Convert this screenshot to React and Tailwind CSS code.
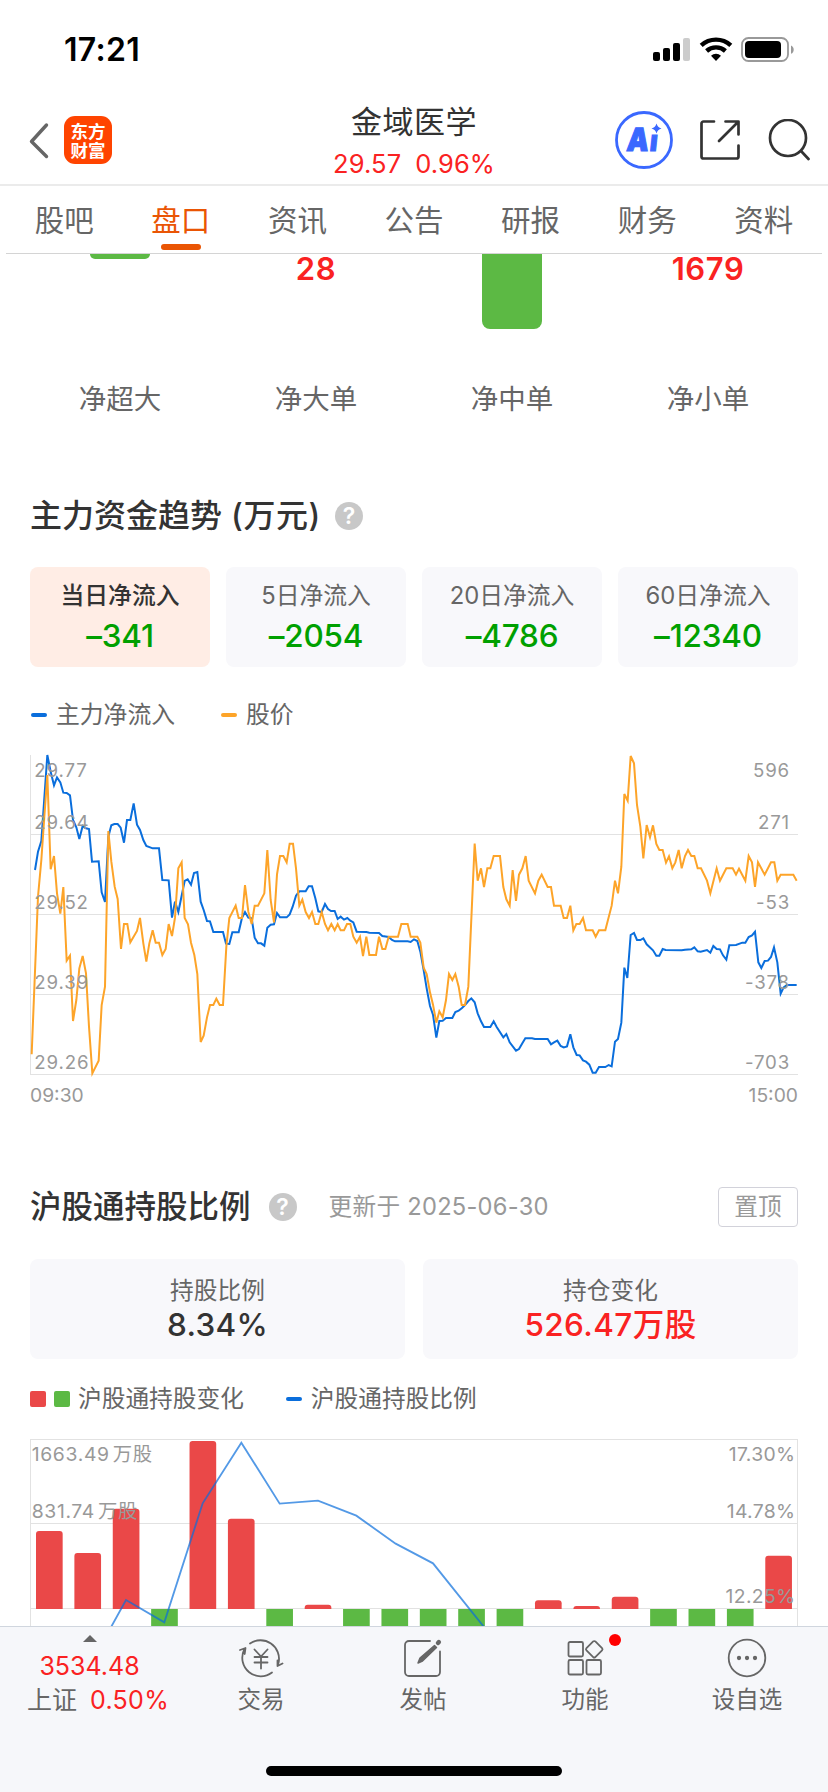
import React from 'react';

const tabs = ['股吧', '盘口', '资讯', '公告', '研报', '财务', '资料'];

const orders = [
  { name: '净超大', bar: 'h-[5px]' },
  { name: '净大单', value: '28' },
  { name: '净中单', bar: 'h-[75px]' },
  { name: '净小单', value: '1679' },
];

const inflows = [
  { name: '当日净流入', value: '–341', active: true },
  { name: '5日净流入', value: '–2054' },
  { name: '20日净流入', value: '–4786' },
  { name: '60日净流入', value: '–12340' },
];

const trendLabels = [
  { y: 110, price: '29.77', flow: '596' },
  { y: 267, price: '29.64', flow: '271' },
  { y: 507, price: '29.52', flow: '-53' },
  { y: 747, price: '29.39', flow: '-378' },
  { y: 987, price: '29.26', flow: '-703' },
];

const flowPoints =
  '105,390 114,335 124,303 142,45 152,95 162,136 171,112 181,127 190,158 200,159 210,166 219,240 229,262 238,297 248,258 258,265 267,267 276,365 296,364 305,457 315,486 325,290 334,256 343,252 353,252 362,263 372,308 381,240 391,240 401,190 411,254 420,270 430,300 439,318 458,325 477,325 487,420 506,421 516,533 525,485 535,516 554,423 563,418 573,434 582,399 592,396 602,485 611,510 621,543 630,544 640,576 669,576 678,611 688,612 697,577 716,577 726,533 735,516 745,533 755,535 764,593 774,610 783,610 793,617 802,563 812,554 822,553 831,519 840,532 860,532 869,523 878,500 888,467 898,454 917,454 926,439 936,439 946,475 955,514 965,516 975,492 984,507 993,513 1004,513 1013,537 1022,530 1032,539 1042,534 1051,542 1060,547 1070,575 1099,576 1108,578 1137,579 1147,588 1166,591 1176,600 1185,604 1223,604 1232,606 1242,598 1252,603 1261,635 1271,690 1280,745 1290,798 1299,824 1309,893 1318,843 1328,842 1338,834 1357,834 1366,816 1376,812 1386,804 1395,795 1405,783 1414,775 1424,787 1433,820 1443,844 1452,861 1471,861 1481,844 1490,861 1510,892 1519,882 1529,907 1548,932 1557,927 1567,910 1576,895 1596,895 1605,897 1643,897 1653,913 1662,907 1672,902 1682,918 1691,922 1701,919 1711,883 1720,922 1730,945 1739,946 1749,961 1758,965 1768,974 1778,998 1787,998 1797,981 1816,981 1826,975 1835,979 1845,905 1854,897 1864,848 1873,683 1882,714 1892,585 1902,579 1911,600 1921,600 1930,595 1940,613 1959,631 1969,647 1978,647 1988,627 1997,630 2045,631 2055,629 2074,628 2083,622 2093,634 2102,635 2121,630 2131,638 2140,618 2150,627 2160,628 2169,646 2179,659 2188,616 2208,615 2227,608 2236,608 2246,591 2256,586 2265,575 2275,667 2284,684 2294,663 2304,662 2313,651 2322,622 2332,667 2342,761 2351,742 2361,735 2390,735';

const pricePoints =
  '95,943 114,470 124,360 133,230 142,105 152,388 162,348 171,460 181,521 190,441 200,662 210,647 219,843 229,780 238,685 248,648 258,700 267,860 277,1000 296,962 305,795 315,740 325,273 334,365 344,440 353,477 363,627 372,552 382,552 391,607 411,573 420,534 430,610 439,665 448,610 458,571 467,608 477,608 487,645 497,627 506,552 516,588 525,533 535,385 545,367 554,534 564,553 573,608 583,645 592,702 602,906 611,887 621,832 630,795 640,795 649,776 659,795 669,795 679,620 688,534 707,497 716,534 726,534 735,435 745,515 755,552 764,497 774,497 793,460 802,330 812,480 822,547 831,403 840,348 850,348 860,367 869,311 879,311 888,385 898,497 907,479 917,516 927,534 936,516 946,552 955,552 965,516 975,552 984,571 994,552 1004,571 1013,552 1022,571 1032,571 1041,552 1051,552 1060,590 1070,608 1080,590 1089,648 1099,590 1108,645 1128,645 1137,590 1147,627 1156,627 1166,590 1194,590 1204,552 1223,552 1232,590 1252,590 1261,608 1271,683 1280,702 1290,757 1299,794 1309,848 1318,814 1328,832 1338,780 1347,702 1357,720 1366,702 1376,740 1385,795 1395,795 1405,740 1424,311 1433,422 1443,385 1452,441 1462,385 1471,385 1481,348 1500,348 1510,441 1519,478 1529,497 1538,390 1548,483 1557,404 1567,385 1577,348 1586,422 1605,460 1615,422 1625,404 1643,441 1653,441 1662,497 1682,497 1691,534 1701,534 1711,497 1720,571 1729,552 1739,552 1749,534 1758,571 1778,571 1787,590 1797,571 1816,571 1835,497 1845,422 1854,460 1864,380 1873,162 1883,182 1892,48 1902,70 1911,195 1921,260 1930,355 1940,255 1950,292 1959,256 1969,312 1978,330 1988,330 1998,368 2007,349 2017,385 2026,367 2036,330 2045,385 2055,348 2064,330 2074,348 2083,348 2093,385 2103,385 2121,422 2131,460 2150,385 2160,422 2179,385 2198,385 2208,404 2217,386 2236,422 2246,348 2256,367 2265,441 2274,367 2294,404 2313,367 2323,367 2332,422 2342,404 2380,404 2390,422';

// top edge of each quarter's bar, null = reduced position (bar goes below zero)
const holdingBars = [333, 399, 266, null, 63, 296, null, 554, null, null, null, null, null, 541, 558, 530, null, null, null, 407];

function StatusBar() {
  return (
    <div className="flex h-[92px] items-start justify-between pt-[35px] pr-[34px] pl-[64px]">
      <span className="mt-[-1px] text-[32px] leading-[31px] font-semibold tracking-[0.3px] text-black">17:21</span>
      <svg className="h-[28px] w-[142px]" viewBox="0 0 142 28">
        <rect x="1" y="17" width="7" height="9" rx="2" />
        <rect x="11" y="13" width="7" height="13" rx="2" />
        <rect x="21" y="8" width="7" height="18" rx="2" />
        <rect x="31" y="3" width="7" height="23" rx="2" fill="#ccc" />
        <g fill="none" stroke="#000" strokeWidth="4.4">
          <path d="M49.2 10.3a22 22 0 0 1 29.6 0" />
          <path d="M54.6 16a14 14 0 0 1 18.8 0" />
        </g>
        <path d="M64 26l-5-5.3a7.5 7.5 0 0 1 10 0z" />
        <rect x="90" y="3" width="46" height="23" rx="6.5" fill="none" stroke="#999" strokeWidth="1.8" />
        <rect x="93" y="6" width="36" height="17" rx="4" />
        <path d="M139 10.5c3.6 1.3 3.6 7 0 8.300z" fill="#999" />
      </svg>
    </div>
  );
}

function Header() {
  return (
    <header className="flex h-[94px] items-center justify-between border-b-2 border-[#ebebeb] pt-[3px] pr-[18px] pl-[28px]">
      <div className="flex w-[230px] items-center">
        <svg className="h-[38px] w-[22px]" viewBox="0 0 22 38" fill="none" stroke="#666" strokeWidth="3.4" strokeLinecap="round" strokeLinejoin="round">
          <path d="M18.500 4L3.500 20.500l15 15" />
        </svg>
        <div className="ml-[14px] flex size-[48px] flex-col items-center justify-center rounded-[11px] bg-[#ff4400] font-['Noto_Sans_CJK_SC',sans-serif] text-[17.5px] leading-[19px] font-bold text-white">
          <span>东方</span>
          <span>财富</span>
        </div>
      </div>
      <div className="flex flex-col items-center pt-[4px]">
        <h1 className="text-[31px] leading-[44px] tracking-[0.5px] text-[#333]">金域医学</h1>
        <div className="flex gap-[14px] text-[25.500px] leading-[40px] tracking-[0.1px] text-[#fa2222]">
          <span>29.57</span>
          <span>0.96%</span>
        </div>
      </div>
      <div className="flex w-[240px] items-center justify-end">
        <svg className="size-[60px]" viewBox="0 0 60 60">
          <circle cx="30" cy="30" r="27.500" fill="none" stroke="#3a68ff" strokeWidth="2.800" />
          <text transform="translate(12 41) skewX(-6) scale(0.86 1)" fill="#3a68ff" stroke="#3a68ff" strokeWidth="1.2" fontFamily="Inter" fontWeight="900" fontSize="32">
            A<tspan dx="1.5" fontSize="29">ı</tspan>
          </text>
          <path d="M42.500 13.500q1 3.900 5 5q-4 1.100-5 5q-1-3.900-5-5q4-1.100 5-5z" fill="#3a68ff" />
        </svg>
        <svg className="ml-[25px] size-[42px]" viewBox="0 0 42 42" fill="none" stroke="#333" strokeWidth="2.700" strokeLinecap="round" strokeLinejoin="round">
          <path d="M15 2.500H4.500a2 2 0 0 0-2 2v33a2 2 0 0 0 2 2h33a2 2 0 0 0 2-2V26.500M26.500 2.500h13v13M38.500 3.500L20 22" />
        </svg>
        <svg className="ml-[27px] size-[42px]" viewBox="0 0 42 42" fill="none" stroke="#333" strokeWidth="2.700" strokeLinecap="round">
          <circle cx="20" cy="19" r="18" />
          <path d="M33.500 32.500l7 7.500" />
        </svg>
      </div>
    </header>
  );
}

function Tabs() {
  return (
    <nav className="mx-[6px] flex h-[68px] border-b border-[#d4d4d4]">
      {tabs.map((tab) => (
        <div
          key={tab}
          className={`flex flex-1 flex-col items-center text-[29.500px] leading-[69px] ${tab === '盘口' ? 'text-[#ea5504]' : 'text-[#666]'}`}
        >
          <span className="h-[58px]">{tab}</span>
          {tab === '盘口' && <span className="h-[6px] w-[40px] rounded-full bg-[#ea5504]" />}
        </div>
      ))}
    </nav>
  );
}

function Help() {
  return (
    <span className="flex size-[28px] items-center justify-center rounded-full bg-[#c8c8c8] text-[23px] leading-none font-semibold text-white">?</span>
  );
}

function Dash({ className }) {
  return <span className={`h-[4px] w-[16px] rounded-full ${className}`} />;
}

function TrendChart() {
  return (
    <svg className="mt-[25px] block h-[320px] w-[768px] overflow-visible" viewBox="90 45 2304 960">
      <path d="M91.500 45V1005M90 283.500H2394M90 523.500H2394M90 763.500H2394M90 1003.500H2394" stroke="#e2e2e2" strokeWidth="3" />
      <polyline points={flowPoints} fill="none" stroke="#0a6edc" strokeWidth="6" />
      <polyline points={pricePoints} fill="none" stroke="#fda429" strokeWidth="6" />
      <g fill="#999" fontSize="56" letterSpacing="2.500">
        {trendLabels.map((l) => (
          <React.Fragment key={l.y}>
            <text x="103" y={l.y}>{l.price}</text>
            <text x="2370" y={l.y} textAnchor="end">{l.flow}</text>
          </React.Fragment>
        ))}
      </g>
    </svg>
  );
}

function HoldingChart() {
  return (
    <svg className="mt-[25px] block h-[187px] w-[768px]" viewBox="90 57 2304 561">
      <path d="M91.500 57V620M2392.500 57V620M90 58.500H2394M90 310.500H2394M90 565.500H2394" fill="none" stroke="#e2e2e2" strokeWidth="3" />
      {holdingBars.map((top, i) => {
        const x = 108 + i * 115.15;
        return top === null ? (
          <rect key={i} x={x} y="567" width="80" height="80" fill="#5cb944" />
        ) : (
          <path key={i} d={`M${x} 567V${top + 9}q0-9 9-9h62q9 0 9 9V567z`} fill="#ea4848" />
        );
      })}
      <polyline
        points="330,627 378,540 493,607 608,250 724,68 839,251 954,242 1069,287 1187,371 1299,430 1456,626"
        fill="none"
        stroke="#0a6edc"
        strokeOpacity="0.7"
        strokeWidth="5.500"
      />
      <g fill="#999" fontSize="58">
        <text x="95" y="123" letterSpacing="2">1663.49<tspan dx="9">万股</tspan></text>
        <text x="95" y="294" letterSpacing="2">831.74<tspan dx="9">万股</tspan></text>
        <text x="2386" y="123" textAnchor="end" letterSpacing="1">17.30%</text>
        <text x="2386" y="294" textAnchor="end" letterSpacing="1">14.78%</text>
        <text x="2386" y="549" textAnchor="end" letterSpacing="1">12.25%</text>
      </g>
    </svg>
  );
}

function FooterItem({ label, children }) {
  return (
    <div className="relative flex flex-1 flex-col items-center pt-[10px]">
      <svg className="size-[44px] overflow-visible" viewBox="0 0 44 44" fill="none" stroke="#666" strokeWidth="1.800" strokeLinecap="round" strokeLinejoin="round">
        {children}
      </svg>
      <span className="mt-px text-[23.500px] leading-[36px] text-[#666]">{label}</span>
    </div>
  );
}

function Footer() {
  return (
    <footer className="h-[166px] border-t border-[#d0d6de] bg-[#f6f7fa]">
      <div className="flex h-[139px]">
        <div className="flex w-[180px] flex-col items-center pt-[8px] pr-px">
          <svg className="h-[7px] w-[14px]" viewBox="0 0 14 7"><path d="M7 0l7 7H0z" fill="#666" /></svg>
          <span className="mt-[7px] text-[25px] leading-[34px] text-[#fa2222]">3534.48</span>
          <span className="flex gap-[13px] pl-[17px] text-[25px] leading-[34px] text-[#666]">
            上证 <span className="tracking-[0.3px] text-[#fa2222]">0.50%</span>
          </span>
        </div>
        <FooterItem label="交易">
          <path d="M11 6.500A18.500 18.500 0 0 1 39.500 26l-.8 2M33 35.500A18.500 18.500 0 0 1 5 13l.8-1.500M1 13l5.500-2-.8 6M38.500 23.500v5.500l5-2.500" />
          <path d="M15.500 12.500l6.500 7 6.500-7M15.500 20h13M15.500 25.500h13M22 20v11.500" />
        </FooterItem>
        <FooterItem label="发帖">
          <path d="M29 4H8a4 4 0 0 0-4 4v27a4 4 0 0 0 4 4h27a4 4 0 0 0 4-4V14.500" />
          <path d="M17 26l2-5L33.500 8.500l2 2L21.500 24z" strokeWidth="1.500" fill="#666" />
          <path d="M37 6l.8-.8" strokeWidth="4.500" />
        </FooterItem>
        <FooterItem label="功能">
          <rect x="5.500" y="5" width="14.500" height="14.500" rx="1.500" />
          <rect x="5.500" y="23" width="14.500" height="14.500" rx="1.500" />
          <rect x="23.500" y="23" width="14.500" height="14.500" rx="1.500" />
          <rect x="25" y="6" width="12.500" height="12.500" rx="1.500" transform="rotate(45 31.250 12.250)" />
          <circle cx="52" cy="3" r="6" fill="#f00" stroke="none" />
        </FooterItem>
        <FooterItem label="设自选">
          <circle cx="22" cy="21" r="18.300" />
          <path d="M14 21h.01M22 21h.01M30 21h.01" strokeWidth="4.300" />
        </FooterItem>
      </div>
      <div className="mx-auto h-[10px] w-[296px] rounded-full bg-black" />
    </footer>
  );
}

function App() {
  return (
    <div className="flex h-[1792px] w-[828px] flex-col overflow-hidden bg-white font-['Inter','Noto_Sans_CJK_SC',sans-serif]">
      <StatusBar />
      <Header />
      <Tabs />

      <main className="h-[1372px] overflow-hidden px-[30px]">
        {/* order size breakdown, scrolled under the tab bar */}
        <section className="grid grid-cols-4 gap-4">
          {orders.map((o) => (
            <div key={o.name} className="flex flex-col items-center">
              <div className="h-[109px]">
                {o.bar && <div className={`w-[60px] rounded-b-[8px] bg-[#5cb944] ${o.bar}`} />}
                {o.value && <div className="text-[31px] leading-[30px] font-semibold tracking-[0.6px] text-[#fa2222]">{o.value}</div>}
              </div>
              <div className="text-[27.500px] leading-[73px] text-[#666]">{o.name}</div>
            </div>
          ))}
        </section>

        <div className="mt-[60px] flex h-[40px] items-center gap-[14px]">
          <h2 className="text-[32px] leading-[40px] font-medium text-[#333]">
            主力资金趋势<span className="ml-[9px] tracking-[0.6px]">(万元)</span>
          </h2>
          <Help />
        </div>
        <div className="mt-[31px] grid grid-cols-4 gap-4">
          {inflows.map((f) => (
            <div key={f.name} className={`flex h-[100px] flex-col items-center rounded-[8px] pt-[10px] ${f.active ? 'bg-[#ffede5]' : 'bg-[#f8f8fb]'}`}>
              <span className={`text-[23.800px] leading-[37px] ${f.active ? 'font-medium text-[#333]' : 'text-[#666]'}`}>{f.name}</span>
              <span className="mt-[3px] text-[31.500px] leading-[37px] font-medium tracking-[-0.2px] text-[#00a000]">{f.value}</span>
            </div>
          ))}
        </div>
        <div className="mt-[33px] flex h-[30px] items-center text-[23.800px] leading-[30px] text-[#666]">
          <Dash className="ml-px bg-[#0a6edc]" />
          <span className="ml-[9px]">主力净流入</span>
          <Dash className="ml-[46px] bg-[#fda429]" />
          <span className="ml-[9px]">股价</span>
        </div>
        <TrendChart />
        <div className="flex h-[40px] items-center justify-between text-[19.300px] leading-[40px] text-[#999]">
          <span>09:30</span>
          <span>15:00</span>
        </div>

        <div className="mt-[72px] flex h-[40px] items-center">
          <h2 className="text-[31.500px] leading-[40px] font-medium text-[#333]">沪股通持股比例</h2>
          <span className="ml-[18px]"><Help /></span>
          <span className="ml-[32px] text-[23.700px] leading-[42px] tracking-[0.25px] text-[#999]">更新于 2025-06-30</span>
          <button className="ml-auto h-[40px] w-[80px] rounded-[4px] border border-[#d2d2da] text-[23.700px] leading-[38px] text-[#999]">置顶</button>
        </div>
        <div className="mt-[32px] grid grid-cols-2 gap-[18px] text-center">
          <div className="flex h-[100px] flex-col rounded-[8px] bg-[#f8f8fb] pt-[15px]">
            <span className="text-[23.700px] leading-[34px] text-[#666]">持股比例</span>
            <span className="text-[31.500px] leading-[33px] font-medium tracking-[0.3px] text-[#333]">8.34%</span>
          </div>
          <div className="flex h-[100px] flex-col rounded-[8px] bg-[#f8f8fb] pt-[15px]">
            <span className="text-[23.700px] leading-[34px] text-[#666]">持仓变化</span>
            <span className="text-[31.500px] leading-[33px] font-medium tracking-[0.4px] text-[#fa2222]">526.47万股</span>
          </div>
        </div>
        <div className="mt-[25px] flex h-[30px] items-center text-[23.700px] leading-[32px] text-[#666]">
          <span className="size-[16px] rounded-[2px] bg-[#ea4848]" />
          <span className="ml-[8px] size-[16px] rounded-[2px] bg-[#5cb944]" />
          <span className="ml-[8px]">沪股通持股变化</span>
          <Dash className="ml-[42px] bg-[#0a6edc]" />
          <span className="ml-[9px]">沪股通持股比例</span>
        </div>
        <HoldingChart />
      </main>

      <Footer />
    </div>
  );
}

export default App;
